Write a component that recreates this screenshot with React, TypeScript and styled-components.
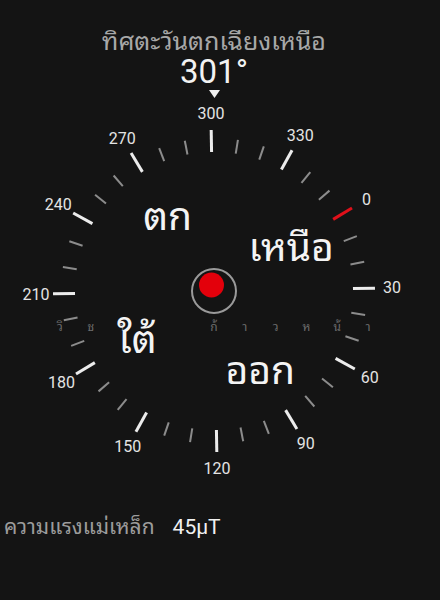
import styled, { createGlobalStyle } from "styled-components";

const GlobalStyle = createGlobalStyle`
  html, body {
    margin: 0;
    padding: 0;
    background: #141414;
  }
  body {
    font-family: Roboto, "Noto Sans", "Noto Sans Thai Looped", "Noto Sans Thai", sans-serif;
  }
`;

const Page = styled.main`
  width: 428px;
  height: 600px;
  display: flex;
  flex-direction: column;
  align-items: center;
  box-sizing: border-box;
  padding-top: 30px;
  overflow: hidden;
`;

const Direction = styled.div`
  color: #a8a8a8;
  font-size: 25px;
  line-height: 24px;
`;

const Degrees = styled.div`
  color: #f2f2f2;
  font-size: 33px;
  line-height: 32px;
  margin-top: 2px;
`;

const Pointer = styled.svg`
  display: block;
  margin-top: 2px;
`;

const Dial = styled.svg`
  display: block;
  overflow: visible;
`;

const Footer = styled.div`
  align-self: stretch;
  display: flex;
  align-items: center;
  gap: 18px;
  margin-top: 35px;
  padding-left: 4px;
  line-height: 24px;
  font-size: 21px;
`;

const FieldLabel = styled.span`
  color: #9c9c9c;
`;

const FieldValue = styled.span`
  color: #f0f0f0;
`;

const heading = 301;
const cx = 214;
const cy = 193;

const polar = (deg: number, r: number) => {
  const a = ((deg - heading) * Math.PI) / 180;
  return { x: cx + r * Math.sin(a), y: cy - r * Math.cos(a) };
};

const cardinals = [
  { v: 0, text: "เหนือ" },
  { v: 90, text: "ออก" },
  { v: 180, text: "ใต้" },
  { v: 270, text: "ตก" },
];

// faint letters spread across the dial
const spread = ["วิ", "ช", "า", "", "", "ก้", "า", "ว", "ห", "น้", "า"];

const App = () => {
  const ticks = Array.from({ length: 36 }, (_, i) => i * 10);
  return (
    <>
      <GlobalStyle />
      <Page>
        <Direction>ทิศตะวันตกเฉียงเหนือ</Direction>
        <Degrees>{heading}°</Degrees>
        <Pointer width="11" height="8" viewBox="0 0 11 8">
          <polygon points="0,0 11,0 5.5,8" fill="#f0f0f0" />
        </Pointer>
        <Dial width="428" height="382" viewBox="0 0 428 382">
          {ticks.map((v) => {
            const major = v % 30 === 0;
            const a = polar(v, 139);
            const b = polar(v, major ? 161 : 153);
            return (
              <line
                key={v}
                x1={a.x}
                y1={a.y}
                x2={b.x}
                y2={b.y}
                stroke={v === 0 ? "#e0101a" : major ? "#ececec" : "#8c8c8c"}
                strokeWidth={major ? 3 : 2}
              />
            );
          })}
          {ticks
            .filter((v) => v % 30 === 0)
            .map((v) => {
              const p = polar(v, 178);
              return (
                <text
                  key={v}
                  x={p.x}
                  y={p.y}
                  fill="#e4e4e4"
                  fontSize="16"
                  fontFamily="Roboto, sans-serif"
                  textAnchor="middle"
                  dominantBaseline="central"
                >
                  {v}
                </text>
              );
            })}
          {spread.map((ch, i) => (
            <text
              key={i}
              x={60 + i * 30.8}
              y={229}
              fill="#6c6c6c"
              fontSize="12"
              textAnchor="middle"
              dominantBaseline="central"
            >
              {ch}
            </text>
          ))}
          {cardinals.map((c) => {
            const p = polar(c.v, 90);
            return (
              <text
                key={c.v}
                x={p.x}
                y={p.y + 3}
                fill="#f4f4f4"
                fontSize="39"
                textAnchor="middle"
                dominantBaseline="central"
              >
                {c.text}
              </text>
            );
          })}
          <circle cx={cx} cy={cy} r="22" fill="none" stroke="#9a9a9a" strokeWidth="2" />
          <circle cx={211.5} cy={187} r="12.5" fill="#e3000b" />
        </Dial>
        <Footer>
          <FieldLabel>ความแรงแม่เหล็ก</FieldLabel>
          <FieldValue>45µT</FieldValue>
        </Footer>
      </Page>
    </>
  );
};

export default App;
